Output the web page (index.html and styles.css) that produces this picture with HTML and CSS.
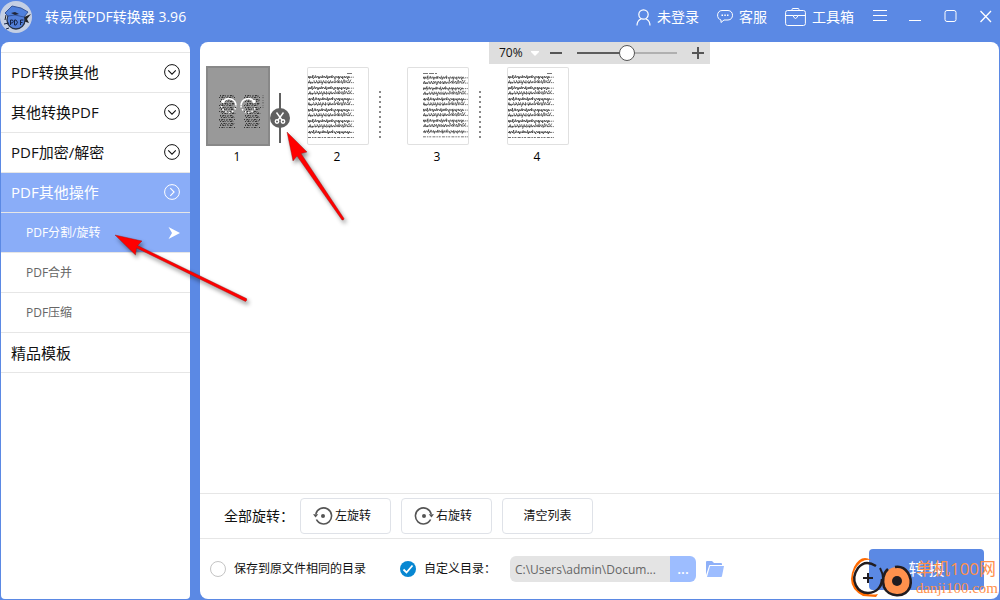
FILE: index.html
```html
<!DOCTYPE html>
<html lang="zh-CN">
<head>
<meta charset="utf-8">
<title>转易侠PDF转换器 3.96</title>
<link rel="stylesheet" href="styles.css">
</head>
<body>
<svg class="defs" aria-hidden="true">
  <symbol id="chevron" viewBox="0 0 16 16"><g fill="none" stroke="currentColor"><circle cx="8" cy="8" r="7.4"/><path d="M4.2 6.3 8 10.1l3.8-3.8" stroke-width="1.1"/></g></symbol>
  <symbol id="rotate" viewBox="0 0 20 20"><g fill="none" stroke="#555" stroke-width="1.6"><path d="M2.8 8A8 8 0 1 1 3.4 13.5M5 15.500l1.500 1.300"/></g><path d="M0 8.200h5.200L2.600 11.600z" fill="#555"/><circle cx="10" cy="10" r="2" fill="#555"/></symbol>
  <symbol id="lines" viewBox="0 0 46 66">
    <g fill="none" stroke="#222" stroke-width=".6">
      <path id="ln-a" d="M0 5l1-2 .5 3 1.500-3 1 2 1-3v4l2-2 .5-2 1 3 1.500-2 1 3 1-3 1.500 2 1-3 .5 3 1-2 2 2 1-3 .5 4 1.500-3 1 2 1-2 1 2v-3l2 2 1 2 1-3 1 2 1.500-2 .5 3 1-3 1.500 2 1-2v3l2-3 1 2 1.500-2 .5 3 1.500-3 1 2" stroke-dasharray="5 .9 3 .7 7 1"/>
      <path id="ln-b" d="M0 10.500l1.500-3 1 3 1-2 .5 2 2-3 1 3 1.500-2v-1l1.500 3 1-3 1 2 1-2 1 4 1.500-4 1 2 1.500-2v3l1.500-2 1-1 .5 3 1.500-3 1 3 1-2 2 1 .5-3 1 3 1.500-2 1 2v-3l2 3 1-2 1 3 1.500-4 1 3 1-2 1 2 1.500-3 1 3 1.500-3" stroke-dasharray="8 1 4 .9 3 .8"/>
      <use href="#ln-a" x="-1" y="11"/><use href="#ln-b" x=".5" y="11"/>
      <use href="#ln-a" x=".5" y="22"/><use href="#ln-b" x="-.5" y="22"/>
      <use href="#ln-a" x="-.5" y="33"/><use href="#ln-b" y="33"/>
      <use href="#ln-a" y="44"/><use href="#ln-b" x=".7" y="44"/>
      <use href="#ln-a" x=".7" y="55"/>
    </g>
    <path d="M0 4.200h46M0 9.600h46M0 15.200h46M0 20.600h46M0 26.200h46M0 31.600h46M0 37.200h46M0 42.600h46M0 48.200h46M0 53.600h46M0 59.400h46M0 64.500h46" stroke="#333" stroke-width=".7" stroke-dasharray="3 1 1.500 .9 2 1.300"/>
  </symbol>
</svg>

<div class="window">
  <header class="titlebar">
    <svg class="logo" viewBox="0 0 32 32" aria-hidden="true">
      <circle cx="16" cy="16" r="16" fill="#c4cfe4"/>
      <path d="M22 17l9-4-4 5 2 4-6-2z" fill="#222"/>
      <circle cx="16" cy="19" r="9" fill="#527fd9" stroke="#263247" stroke-width="1.300"/>
      <path d="M5 12 12 5l9 2 7 4-4 5-9-2-7 1z" fill="#4f80dc" stroke="#35559a"/>
      <path d="M11 12l4-1 4 2-4 1z" fill="#202536"/><path d="M6 14l-1 5" stroke="#222"/>
      <path d="M10.500 24v-5h2q1.500 1.500 0 3h-2m4 2v-5h1.500q3 2 0 5zm6 0v-5h3m-3 2.500h2M4 23l5-1M9 27l-3 1" fill="none" stroke="#152345"/>
    </svg>
    <h1 class="app-title">转易侠PDF转换器 3.96</h1>
    <nav class="top-menu" aria-label="工具">
      <button class="top-item"><svg width="15" height="17" viewBox="0 0 15 17"><g fill="none" stroke="currentColor" stroke-width="1.200"><circle cx="7.500" cy="5.500" r="4.700"/><path d="M1 16.500c0-3.500 1.500-5.500 4-6.500M14 16.500c0-3.500-1.500-5.500-4-6.500"/></g></svg>未登录</button>
      <button class="top-item"><svg width="16" height="16" viewBox="0 0 16 16"><path d="M5 1.500h6c6 0 6 9.500 0 9.500H7L4 13.500V11C-.7 10-.7 1.500 5 1.500z" fill="none" stroke="currentColor"/><path d="M4.500 6.200h1.500M7.300 6.200h1.500M10 6.200h1.500" stroke="currentColor" stroke-width="1.400"/></svg>客服</button>
      <button class="top-item"><svg width="21" height="19" viewBox="0 0 21 19"><g fill="none" stroke="currentColor"><rect x=".6" y="2.500" width="19.800" height="15" rx="2"/><path d="M7 2.500V1.500q0-1 1-1h5q1 0 1 1v1M.6 7.500h7.600M12.700 7.500h7.700"/><path d="M8.500 7.500h4v1.500q-2 3-4 0z"/></g></svg>工具箱</button>
      <button class="win-btn" aria-label="菜单"><svg viewBox="0 0 17 17"><path d="M1 1.500h14M1 6.500h14M1 11.500h14" stroke="currentColor"/></svg></button>
      <button class="win-btn" aria-label="最小化"><svg viewBox="0 0 17 17"><path d="M2 11.500h12" stroke="currentColor"/></svg></button>
      <button class="win-btn" aria-label="最大化"><svg viewBox="0 0 17 17"><rect x="3" y="1.500" width="11" height="11" rx="2" fill="none" stroke="currentColor"/></svg></button>
      <button class="win-btn" aria-label="关闭"><svg viewBox="0 0 17 17"><path d="M3.500 2l10.500 11M14 2l-10.500 11" stroke="currentColor" stroke-width="1.300"/></svg></button>
    </nav>
  </header>

  <div class="content">
    <nav class="sidebar" aria-label="功能">
      <a class="nav-item" href="#to-other">PDF转换其他<svg><use href="#chevron"/></svg></a>
      <a class="nav-item" href="#to-pdf">其他转换PDF<svg><use href="#chevron"/></svg></a>
      <a class="nav-item" href="#encrypt">PDF加密/解密<svg><use href="#chevron"/></svg></a>
      <a class="nav-item active" href="#other">PDF其他操作<svg class="side"><use href="#chevron"/></svg></a>
      <a class="nav-item sub active" href="#split">PDF分割/旋转<svg class="pointer" viewBox="0 0 12 12"><path d="M.5 0 12 6 .5 12 4 6z" fill="#fff"/></svg></a>
      <a class="nav-item sub" href="#merge">PDF合并</a>
      <a class="nav-item sub" href="#compress">PDF压缩</a>
      <a class="nav-item" href="#templates">精品模板</a>
    </nav>

    <main class="main">
      <section class="workspace">
        <div class="zoombar">
          <select class="zoom-select" aria-label="缩放比例"><option>70%</option></select>
          <svg class="caret" viewBox="0 0 8 5"><path d="M0 0h8v1L4 5 0 1z" fill="#fff"/></svg>
          <button class="zoom-btn" aria-label="缩小"><svg viewBox="0 0 12 12"><path d="M0 6h12" stroke="#555" stroke-width="2"/></svg></button>
          <input class="zoom-range" type="range" min="0" max="100" value="50" aria-label="缩放">
          <button class="zoom-btn" aria-label="放大"><svg viewBox="0 0 12 12"><path d="M0 6h12M6 0v12" stroke="#555" stroke-width="2"/></svg></button>
        </div>
        <ol class="pages">
          <li class="page">
            <div class="sheet selected"><svg viewBox="0 0 64 80">
              <g fill="none" stroke="#333" stroke-width="1">
                <path id="col" d="M14 29.500h14M13 31.500h17M15 33.500h14M14 35.500h15M16 37.500h13M13 39.500h15M14 41.500h16M15 43.500h14M13 45.500h15M16 47.500h14M14 49.500h13M15 51.500h14M13 53.500h16M14 55.500h14M15 57.500h15M14 59.500h13M13 61.500h16" stroke-dasharray="1 1.400 2 .8 .6 1.700"/>
                <path d="M14 30.500h15M15 34.500h14M14 38.500h15M13 42.500h16M15 46.500h13M14 50.500h15M13 54.500h15M14 58.500h15" stroke="#555" stroke-dasharray=".7 1.200 1.300 2"/>
                <use href="#col" x="25"/>
                <path d="M39 30.500h15M40 34.500h14M39 38.500h15M40 42.500h14M40 46.500h13M39 50.500h15M40 54.500h15M39 58.500h15M57 29v13" stroke="#555" stroke-dasharray=".7 1.200 1.300 2"/>
              </g>
              <g fill="none" stroke="#fff" stroke-width="1.600">
                <path d="M17 35.500A7.300 7.300 0 0 1 30 39.500M35 39.500A7.300 7.300 0 0 1 48 35.500"/>
                <path d="M15.500 40A7.300 7.300 0 0 0 30 40M35 40A7.300 7.300 0 0 0 49.500 40" stroke-dasharray="1.500 1.900"/>
              </g>
              <circle cx="17" cy="35.500" r="1.800" fill="#fff"/><circle cx="48" cy="35.500" r="1.800" fill="#fff"/>
            </svg></div>
            <button class="cut" aria-label="在此分割"><svg viewBox="0 0 20 50"><path d="M10 0v50" stroke="#606060" stroke-width="2"/><circle cx="10" cy="25" r="10" fill="#606060"/><g fill="none" stroke="#fff" stroke-width="1.400"><path d="M6.500 19.500l5.800 8M13.500 19.500l-5.800 8"/><circle cx="7" cy="28.500" r="1.700"/><circle cx="13" cy="28.500" r="1.700"/></g></svg></button>
            <span class="num">1</span>
          </li>
          <li class="page">
            <div class="sheet"><svg viewBox="0 0 64 80"><path d="M41 7.500h5" stroke="#777"/><use href="#lines" x="2" y="7" width="46" height="66"/></svg></div>
            <div class="divider"></div><span class="num">2</span>
          </li>
          <li class="page">
            <div class="sheet"><svg viewBox="0 0 64 80"><path d="M17 7.500h14" stroke="#777" stroke-dasharray="5 1"/><use href="#lines" x="17" y="7" width="45" height="66"/></svg></div>
            <div class="divider"></div><span class="num">3</span>
          </li>
          <li class="page">
            <div class="sheet"><svg viewBox="0 0 64 80"><path d="M41 7.500h5" stroke="#777"/><use href="#lines" x="2" y="7" width="46" height="66"/></svg></div>
            <span class="num">4</span>
          </li>
        </ol>
      </section>

      <section class="rotate-row">
        <span class="row-label">全部旋转：</span>
        <button class="tool turn"><svg><use href="#rotate"/></svg>左旋转</button>
        <button class="tool turn"><svg class="flip"><use href="#rotate"/></svg>右旋转</button>
        <button class="tool">清空列表</button>
      </section>

      <form class="save-row">
        <label class="choice same"><input type="radio" name="dir">保存到原文件相同的目录</label>
        <label class="choice custom"><input type="radio" name="dir" checked>自定义目录：</label>
        <input class="path" type="text" value="C:\Users\admin\Docum..." aria-label="目录" readonly>
        <button class="browse" type="button">...</button>
        <button class="folder" type="button" aria-label="打开目录"><svg viewBox="0 0 18 16"><path d="M0 14V1q0-1 1-1h5l2 2h7q1 0 1 1v1H4q-1 0-1 1z" fill="#8eb0f8"/><path d="M4 5h14l-2 10q0 1-1 1H1z" fill="#9dbdff"/></svg></button>
        <button class="convert" type="button">转 换</button>
      </form>
    </main>
  </div>

  <svg class="arrows" viewBox="0 0 360 310" aria-hidden="true">
    <g fill="#f00" stroke="#8d1717" stroke-width=".4">
      <path d="M287 132l20 20-6 1.500 43 65q0 2-2 1.500l-45-64-4 5z"/>
      <path d="M115 235l27 6-4.500 4.500 109 53q1 2-1 3l-109-53.500-1 7z"/>
    </g>
  </svg>

  <div class="watermark">
    <svg viewBox="0 0 64 42" aria-hidden="true">
      <path d="M21 3Q11-3 4 10q-9 20 9 29l13 1 2-3q-11 2-18-4Q-4 19 11 5q5-3 10-2z" fill="#ff6a00"/>
      <path d="M26 9Q15 2 8 11c-9 13 0 25 10 25q13-1 14-14" fill="none" stroke="#211c20" stroke-width="2.400"/>
      <path d="M13 21h10M18 16v10M30 11q6 11 0 19" stroke="#211c20" stroke-width="2" fill="none"/>
      <circle cx="47" cy="24" r="14" fill="#ff914d"/>
      <path d="M45 10C56 8 63 20 60 30c-5 12-22 10-26 0-2-6-1-14 4-18" fill="none" stroke="#211c20" stroke-width="2.600"/>
      <circle cx="47" cy="24" r="5" fill="#211c20"/>
    </svg>
    <div class="mark-text"><span class="mark-name">单机100网</span><span class="mark-url">danji100.com</span></div>
  </div>
</div>
</body>
</html>
```
FILE: styles.css
```css
* { box-sizing: border-box; }

body {
  margin: 0;
  font: 12px/20px "Open Sans", "Noto Sans CJK SC", sans-serif;
  color: #111;
  background: #5b89e4;
}

button, input, select { font: inherit; color: inherit; margin: 0; padding: 0; border: 0; background: none; }
svg { display: block; flex: none; }
.defs { position: absolute; width: 0; height: 0; }

.window { position: relative; display: flex; flex-direction: column; min-height: 100vh; padding-bottom: 1px; }

.titlebar { display: flex; align-items: center; height: 42px; padding: 0 6px 8px 0; color: #fff; }
.logo { width: 32px; height: 32px; }
.app-title { margin: 0 auto 0 13px; font-size: 14px; font-weight: 400; }
.top-menu { display: flex; align-items: center; gap: 18px; }
.top-item { display: flex; align-items: center; gap: 6px; font-size: 14px; }
.win-btn svg { width: 17px; height: 17px; }

.content { flex: 1; display: flex; gap: 10px; padding: 0 1px; }

.sidebar { width: 189px; flex: none; padding-top: 10px; background: #fff; border-radius: 8px 8px 4px 4px; overflow: hidden; }
.nav-item {
  display: flex; align-items: center; justify-content: space-between;
  height: 40px; padding: 0 10px 2px; border-bottom: 1px solid #e6e6e6;
  font-size: 15px; color: #111; text-decoration: none;
}
.nav-item:first-child { height: 41px; border-top: 1px solid #e6e6e6; }
.nav-item svg { width: 16px; height: 16px; }
.nav-item.sub { padding: 0 10px 0 25px; font-size: 12px; color: #666; }
.nav-item.active { background: #8aadf8; color: #fff; }
.nav-item .side { transform: rotate(-90deg); }
.nav-item .pointer { width: 12px; height: 12px; }
.nav-item:last-child { padding-bottom: 0; }

.main { flex: 1; min-width: 0; display: flex; flex-direction: column; background: #fff; border-radius: 8px; }

.workspace { flex: 1; }
.zoombar { display: flex; align-items: center; width: 221px; height: 22px; margin: 0 auto; padding-left: 10px; background: #dedede; }
.zoom-select { appearance: none; width: 28px; }
.caret { width: 8px; height: 5px; margin: 0 11px 0 4px; }
.zoom-btn svg { width: 12px; height: 12px; }
.zoom-range {
  appearance: none; width: 100px; height: 16px; margin: 0 15px;
  background: linear-gradient(90deg, #5c5c5c 50%, #b0b0b0 50%) center / 100% 2px no-repeat;
}
.zoom-range::-webkit-slider-thumb { appearance: none; width: 16px; height: 16px; border: 1px solid #555; border-radius: 50%; background: #fff; }

.pages { display: flex; flex-wrap: wrap; margin: 0; padding: 2px 0 0 6px; list-style: none; }
.page { display: grid; grid-template-columns: 64px 20px; width: 100px; align-items: center; }
.sheet { height: 80px; border: 1px solid transparent; background: #fff padding-box; border-radius: 3px; box-shadow: inset 0 0 0 1px #e0e0e0; }
.sheet svg { width: 64px; height: 80px; margin: -1px; }
.sheet.selected { border: 2px solid #888; background: #999; border-radius: 0; box-shadow: none; }
.sheet.selected svg { margin: -2px; }
.cut { height: 50px; margin-top: 24px; }
.cut svg { width: 20px; height: 50px; }
.divider { height: 48px; margin: 18px 9px 0; background: repeating-linear-gradient(#888 0 2px, transparent 2px 5px); }
.num { grid-column: 1; text-align: center; font-size: 12px; color: #000; padding: 1px 2px 0 0; }

.rotate-row { display: flex; align-items: center; gap: 10px; height: 45px; padding-left: 24px; border-top: 1px solid #e6e6e6; }
.row-label { width: 66px; white-space: nowrap; font-size: 14px; }
.tool {
  display: flex; align-items: center; justify-content: center; gap: 2px;
  width: 91px; height: 36px; border: 1px solid #dfe2e8; border-radius: 4px;
}
.turn { padding-right: 7px; }
.tool svg { width: 20px; height: 20px; }
.flip { transform: scaleX(-1); }

.save-row { display: flex; align-items: center; height: 61px; padding: 0 15px 0 10px; border-top: 1px solid #e6e6e6; }
.choice { display: flex; align-items: center; gap: 8px; white-space: nowrap; }
.choice input { appearance: none; width: 16px; height: 16px; border: 1px solid #c4c4c4; border-radius: 50%; }
.choice input:checked {
  border: 0;
  background: #0787d2 url("data:image/svg+xml,%3Csvg xmlns='http://www.w3.org/2000/svg' viewBox='0 0 16 16'%3E%3Cpath d='M3.500 8.500l3 3 6-7' fill='none' stroke='white' stroke-width='1.800'/%3E%3C/svg%3E");
}
.same { width: 190px; }
.custom { width: 110px; }
.path { width: 160px; height: 26px; padding-left: 5px; font-size: 12px; color: #666; background: #e4e4e4; border-radius: 6px 0 0 6px; }
.browse { width: 26px; height: 26px; color: #fff; font-size: 14px; font-weight: 600; background: #9dbdff; border-radius: 0 6px 6px 0; }
.folder { margin-left: 10px; }
.folder svg { width: 18px; height: 16px; }
.convert { width: 115px; height: 41px; margin-left: auto; font-size: 16px; color: #fff; background: #5b89e4; border-radius: 4px; }

.arrows { position: absolute; left: 0; top: 0; width: 360px; height: 310px; pointer-events: none; filter: drop-shadow(2px 3px 2px rgba(0, 0, 0, .45)); }

.watermark { position: absolute; right: 2px; bottom: 1px; display: flex; align-items: center; gap: 2px; pointer-events: none; }
.watermark svg { width: 64px; height: 42px; }
.mark-text { display: flex; flex-direction: column; color: #ff914d; white-space: nowrap; }
.mark-name { font-size: 17px; line-height: 20px; }
.mark-url { font: 15px/18px "Liberation Serif", serif; }
```
